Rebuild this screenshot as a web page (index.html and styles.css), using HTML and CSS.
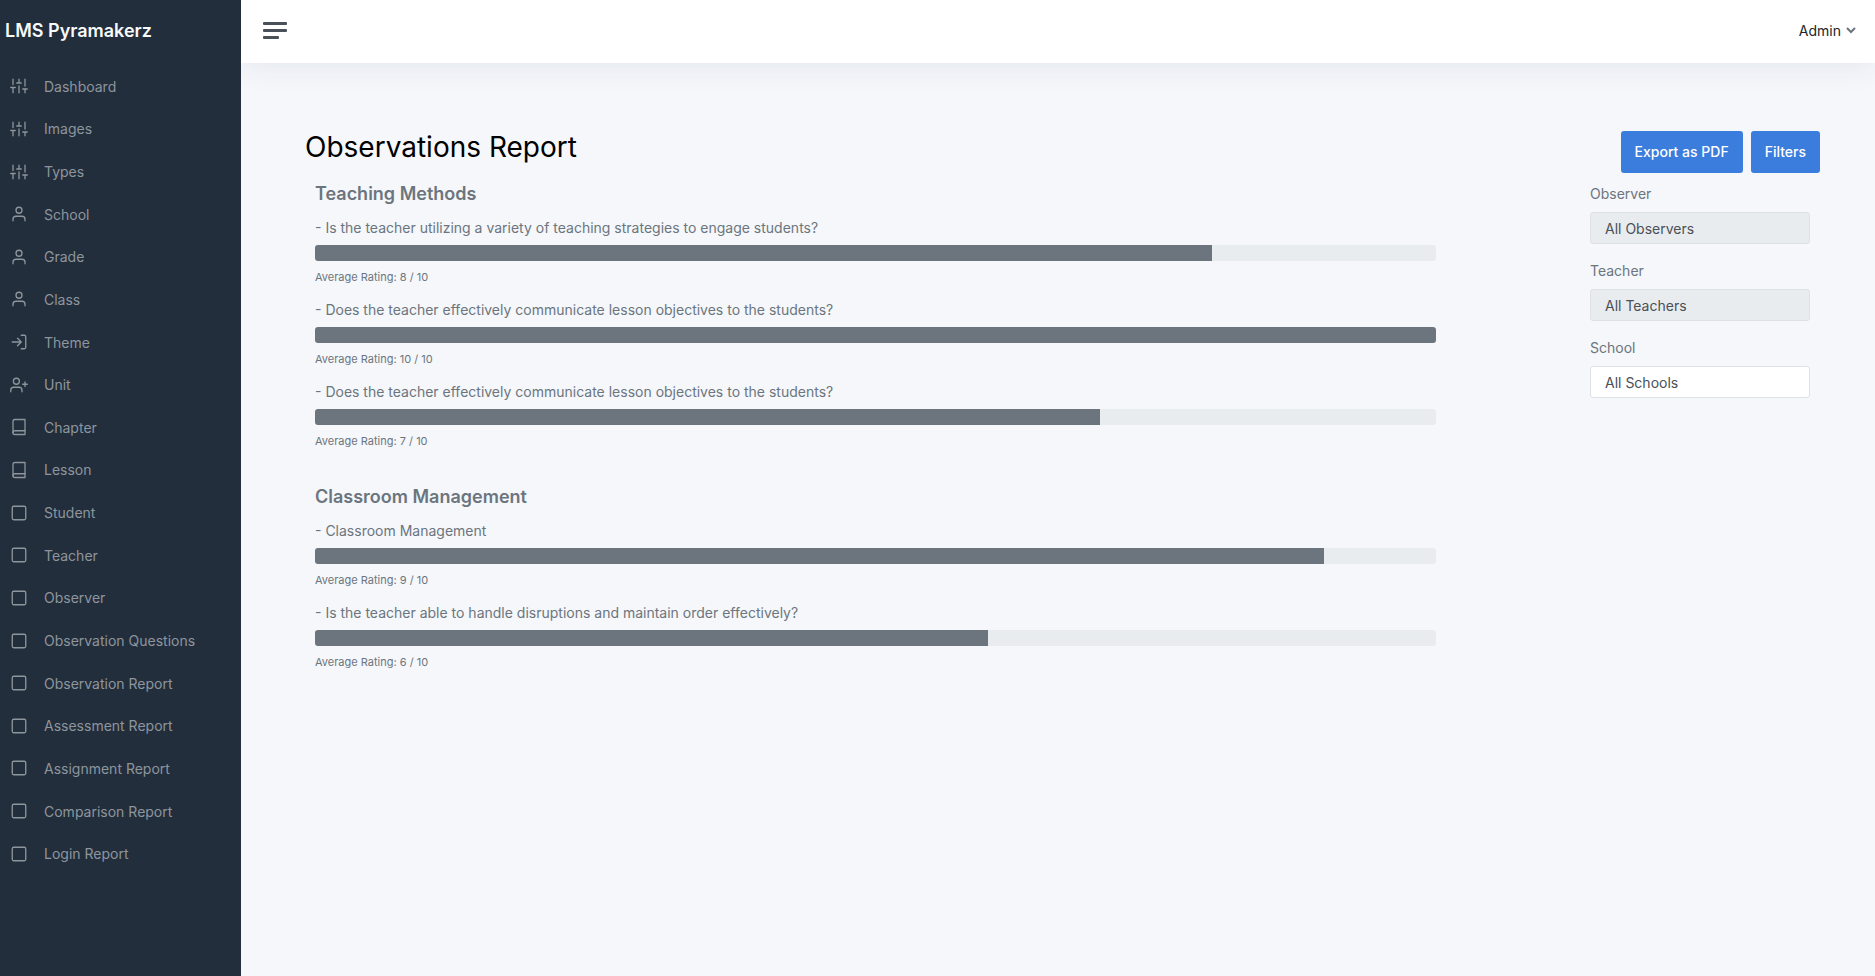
FILE: index.html
```html
<!DOCTYPE html>
<html lang="en">
<head>
<meta charset="utf-8">
<title>Observations Report</title>
<link rel="stylesheet" href="styles.css">
</head>
<body>
<svg class="sprite" aria-hidden="true">
  <symbol id="sliders" viewBox="0 0 24 24"><path d="M4 21v-7M4 10V3M12 21v-9M12 8V3M20 21v-5M20 12V3M1 14h6M9 8h6M17 16h6"/></symbol>
  <symbol id="user" viewBox="0 0 24 24"><path d="M20 21v-2a4 4 0 0 0-4-4H8a4 4 0 0 0-4 4v2"/><circle cx="12" cy="7" r="4"/></symbol>
  <symbol id="log-in" viewBox="0 0 24 24"><path d="M15 3h4a2 2 0 0 1 2 2v14a2 2 0 0 1-2 2h-4"/><path d="M10 17l5-5-5-5M15 12H3"/></symbol>
  <symbol id="user-plus" viewBox="0 0 24 24"><path d="M16 21v-2a4 4 0 0 0-4-4H5a4 4 0 0 0-4 4v2"/><circle cx="8.500" cy="7" r="4"/><path d="M20 8v6M23 11h-6"/></symbol>
  <symbol id="book" viewBox="0 0 24 24"><path d="M4 19.500A2.500 2.500 0 0 1 6.500 17H20"/><path d="M6.500 2H20v20H6.500A2.500 2.500 0 0 1 4 19.500v-15A2.500 2.500 0 0 1 6.500 2z"/></symbol>
  <symbol id="square" viewBox="0 0 24 24"><rect x="3" y="3" width="18" height="18" rx="2"/></symbol>
</svg>
<div class="wrapper">
  <nav class="sidebar" aria-label="Main">
    <a class="brand" href="#">LMS Pyramakerz</a>
    <ul class="nav">
      <li><a href="#"><svg class="icon"><use href="#sliders"/></svg>Dashboard</a></li>
      <li><a href="#"><svg class="icon"><use href="#sliders"/></svg>Images</a></li>
      <li><a href="#"><svg class="icon"><use href="#sliders"/></svg>Types</a></li>
      <li><a href="#"><svg class="icon"><use href="#user"/></svg>School</a></li>
      <li><a href="#"><svg class="icon"><use href="#user"/></svg>Grade</a></li>
      <li><a href="#"><svg class="icon"><use href="#user"/></svg>Class</a></li>
      <li><a href="#"><svg class="icon"><use href="#log-in"/></svg>Theme</a></li>
      <li><a href="#"><svg class="icon"><use href="#user-plus"/></svg>Unit</a></li>
      <li><a href="#"><svg class="icon"><use href="#book"/></svg>Chapter</a></li>
      <li><a href="#"><svg class="icon"><use href="#book"/></svg>Lesson</a></li>
      <li><a href="#"><svg class="icon"><use href="#square"/></svg>Student</a></li>
      <li><a href="#"><svg class="icon"><use href="#square"/></svg>Teacher</a></li>
      <li><a href="#"><svg class="icon"><use href="#square"/></svg>Observer</a></li>
      <li><a href="#"><svg class="icon"><use href="#square"/></svg>Observation Questions</a></li>
      <li><a href="#"><svg class="icon"><use href="#square"/></svg>Observation Report</a></li>
      <li><a href="#"><svg class="icon"><use href="#square"/></svg>Assessment Report</a></li>
      <li><a href="#"><svg class="icon"><use href="#square"/></svg>Assignment Report</a></li>
      <li><a href="#"><svg class="icon"><use href="#square"/></svg>Comparison Report</a></li>
      <li><a href="#"><svg class="icon"><use href="#square"/></svg>Login Report</a></li>
    </ul>
  </nav>
  <div class="page">
    <header class="topbar">
      <button class="toggle" type="button" aria-label="Toggle sidebar"><span></span><span></span><span></span></button>
      <button class="account" type="button">Admin
        <svg class="chevron" viewBox="0 0 10 7"><path d="M1 1l4 4 4-4"/></svg>
      </button>
    </header>
    <main class="content">
      <div class="heading">
        <h1>Observations Report</h1>
        <div class="actions">
          <button class="btn" type="button">Export as PDF</button>
          <button class="btn" type="button">Filters</button>
        </div>
      </div>
      <div class="columns">
        <div class="report">
          <section class="group">
            <h2>Teaching Methods</h2>
            <div class="question">
              <p>- Is the teacher utilizing a variety of teaching strategies to engage students?</p>
              <div class="track"><div class="fill" style="width:80%"></div></div>
              <small>Average Rating: 8 / 10</small>
            </div>
            <div class="question">
              <p>- Does the teacher effectively communicate lesson objectives to the students?</p>
              <div class="track"><div class="fill" style="width:100%"></div></div>
              <small>Average Rating: 10 / 10</small>
            </div>
            <div class="question">
              <p>- Does the teacher effectively communicate lesson objectives to the students?</p>
              <div class="track"><div class="fill" style="width:70%"></div></div>
              <small>Average Rating: 7 / 10</small>
            </div>
          </section>
          <section class="group">
            <h2>Classroom Management</h2>
            <div class="question">
              <p>- Classroom Management</p>
              <div class="track"><div class="fill" style="width:90%"></div></div>
              <small>Average Rating: 9 / 10</small>
            </div>
            <div class="question">
              <p>- Is the teacher able to handle disruptions and maintain order effectively?</p>
              <div class="track"><div class="fill" style="width:60%"></div></div>
              <small>Average Rating: 6 / 10</small>
            </div>
          </section>
        </div>
        <form class="filters">
          <div class="field">
            <label for="observer">Observer</label>
            <select id="observer" disabled><option>All Observers</option></select>
          </div>
          <div class="field">
            <label for="teacher">Teacher</label>
            <select id="teacher" disabled><option>All Teachers</option></select>
          </div>
          <div class="field">
            <label for="school">School</label>
            <select id="school"><option>All Schools</option></select>
          </div>
        </form>
      </div>
    </main>
  </div>
</div>
</body>
</html>
```

FILE: styles.css
```css
*, *::before, *::after { box-sizing: border-box; }

body {
  margin: 0;
  background: #f5f7fb;
  color: #6c757d;
  font-family: Inter, "Liberation Sans", sans-serif;
  font-size: 14px;
  line-height: 21px;
}

h1, h2, p, ul { margin: 0; padding: 0; }
a { color: inherit; text-decoration: none; }
button { font: inherit; border: 0; cursor: pointer; }

.sprite { display: none; }

.wrapper { display: flex; min-height: 100vh; }

.sidebar {
  flex: 0 0 241px;
  background: #222e3c;
}

.brand {
  display: block;
  padding: 16px 5px;
  color: #f8f9fa;
  font-size: 18px;
  font-weight: 600;
  line-height: 29px;
}

.nav {
  display: grid;
  grid-auto-rows: 1fr;
  height: 810px;
  margin-top: 4px;
  list-style: none;
}

.nav a {
  display: flex;
  align-items: center;
  gap: 16px;
  height: 100%;
  padding: 0 10px;
  color: #8e959c;
}

.icon {
  width: 18px;
  height: 18px;
  fill: none;
  stroke: currentColor;
  stroke-width: 1.75;
  stroke-linecap: round;
  stroke-linejoin: round;
}

.page { flex: 1; min-width: 0; }

.topbar {
  display: flex;
  align-items: center;
  justify-content: space-between;
  height: 63px;
  padding: 0 19px 2px 22px;
  background: #fff;
  box-shadow: 0 0 32px rgba(41, 48, 66, 0.1);
  clip-path: inset(0 0 -40px 0);
}

.toggle {
  display: grid;
  gap: 4px;
  padding: 0;
  background: none;
}

.toggle span {
  width: 24px;
  height: 3px;
  border-radius: 1px;
  background: #495057;
}

.toggle span:last-child { width: 16px; }

.account {
  display: flex;
  align-items: center;
  gap: 5px;
  padding: 0;
  background: none;
  color: #212529;
}

.chevron {
  width: 10px;
  height: 7px;
  fill: none;
  stroke: #6c757d;
  stroke-width: 2;
}

.content { padding: 68px 55px 48px 64px; }

.heading {
  display: flex;
  align-items: flex-start;
  justify-content: space-between;
}

h1 {
  color: #000;
  font-size: 28px;
  font-weight: 400;
  line-height: 32px;
}

.actions { display: flex; gap: 8px; }

.btn {
  padding: 10px 14px 11px;
  border-radius: 3px;
  background: #3b7ddd;
  color: #fff;
  font-weight: 500;
}

.columns {
  display: grid;
  grid-template-columns: 1fr 220px;
  gap: 154px;
  margin-top: 10px;
  padding: 0 10px;
}

.group { margin-bottom: 35px; }

h2 {
  margin-bottom: 12px;
  font-size: 18px;
  font-weight: 600;
  line-height: 22px;
}

.question { margin-bottom: 12px; }

.track {
  height: 16px;
  margin: 7px 0 6px;
  overflow: hidden;
  border-radius: 3px;
  background: #e9ecef;
}

.fill { height: 100%; background: #6c757d; }

small { display: block; font-size: 11px; line-height: 20px; }

.field { margin-bottom: 16px; }

label { display: block; margin-bottom: 8px; }

select {
  display: block;
  width: 100%;
  height: 32px;
  padding: 0 14px;
  border: 1px solid #dee2e6;
  border-radius: 3px;
  appearance: none;
  background: #fff;
  color: #495057;
  font: inherit;
}

select:disabled { background: #e9ecef; color: #495057; opacity: 1; }
```
